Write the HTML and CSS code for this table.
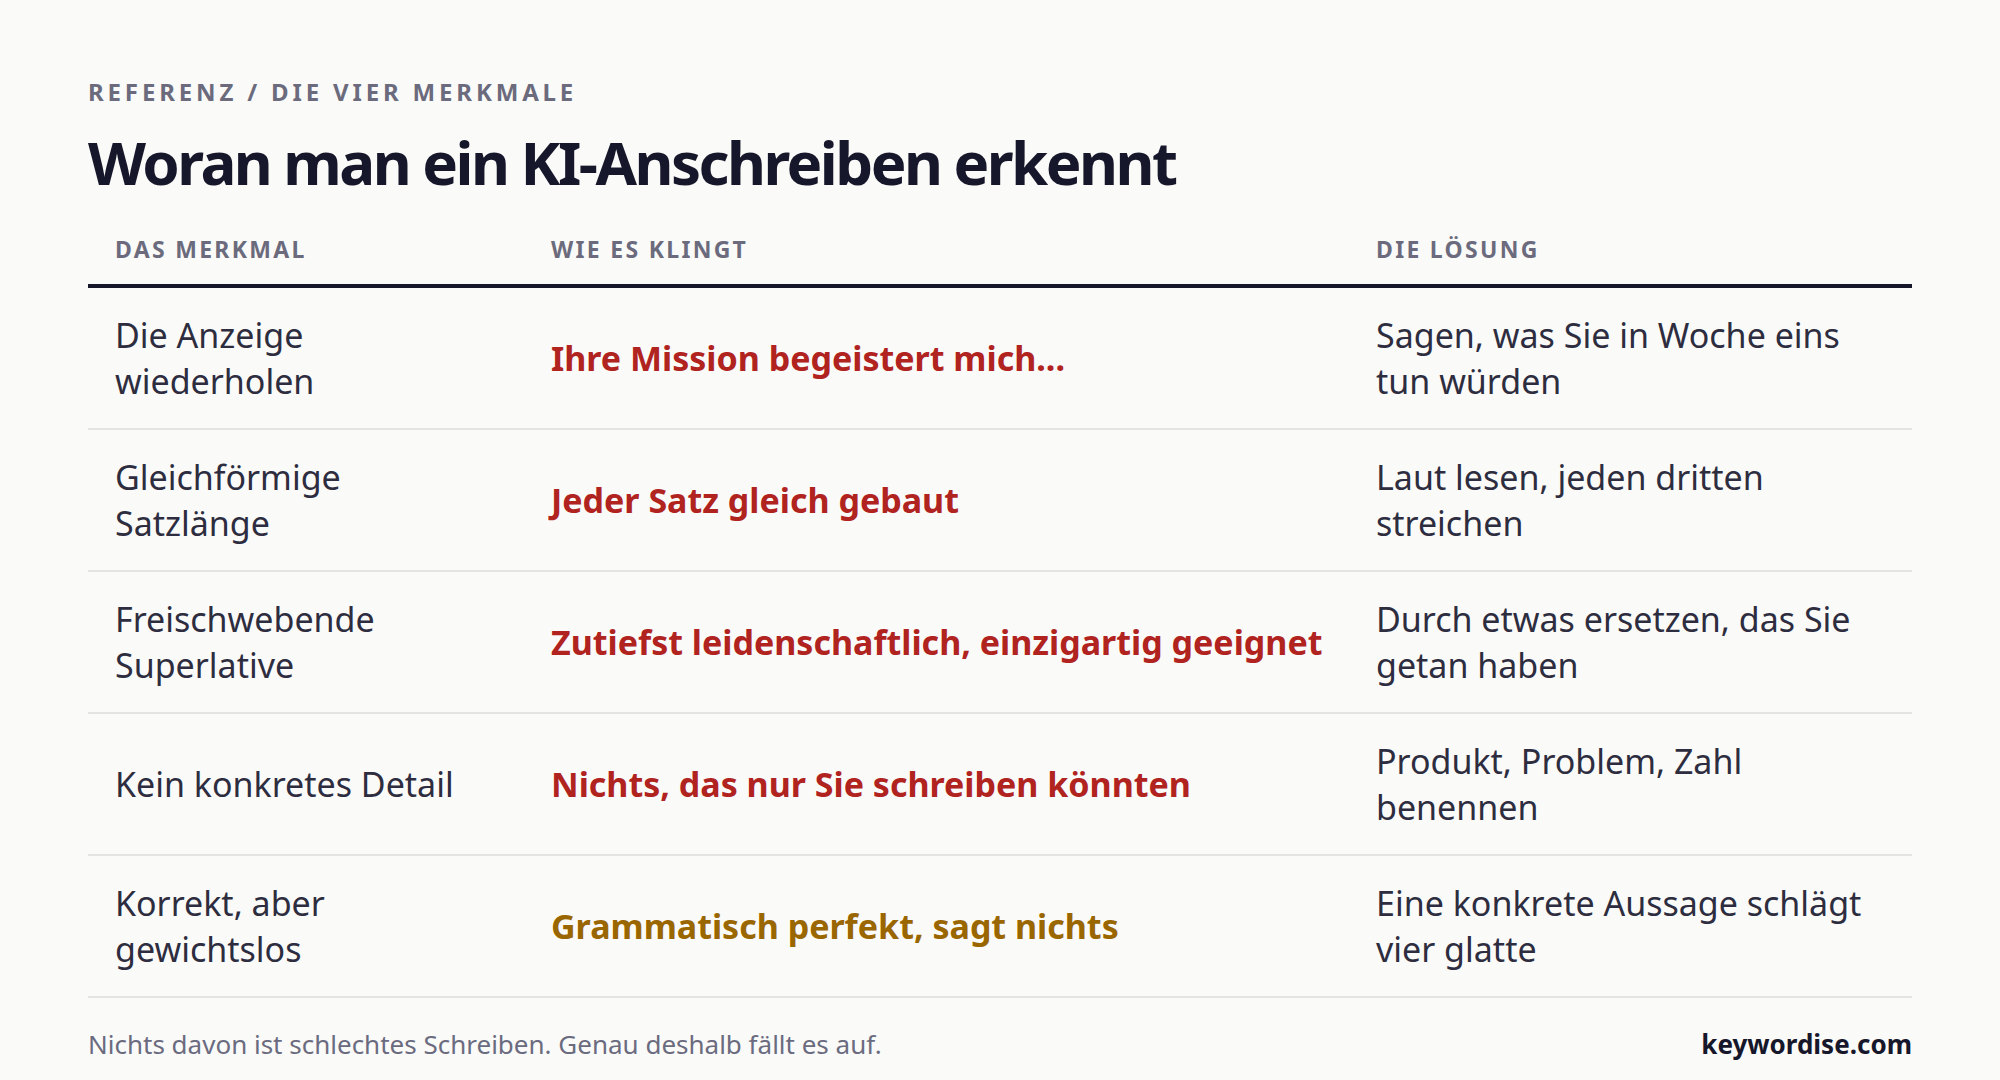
FILE: index.html
```html
<!DOCTYPE html>
<html lang="de">
<head>
<meta charset="utf-8">
<title>Woran man ein KI-Anschreiben erkennt</title>
<link rel="stylesheet" href="styles.css">
</head>
<body>
<main class="page">
  <div class="eyebrow">Referenz / Die vier Merkmale</div>
  <h1 class="title">Woran man ein KI-Anschreiben erkennt</h1>
  <div class="table">
    <div class="row head">
      <div class="cell">Das Merkmal</div>
      <div class="cell">Wie es klingt</div>
      <div class="cell">Die Lösung</div>
    </div>
    <div class="row">
      <div class="cell">Die Anzeige wiederholen</div>
      <div class="cell quote red">Ihre Mission begeistert mich...</div>
      <div class="cell">Sagen, was Sie in Woche eins tun würden</div>
    </div>
    <div class="row">
      <div class="cell">Gleichförmige Satzlänge</div>
      <div class="cell quote red">Jeder Satz gleich gebaut</div>
      <div class="cell">Laut lesen, jeden dritten streichen</div>
    </div>
    <div class="row">
      <div class="cell">Freischwebende Superlative</div>
      <div class="cell quote red">Zutiefst leidenschaftlich, einzigartig geeignet</div>
      <div class="cell">Durch etwas ersetzen, das Sie getan haben</div>
    </div>
    <div class="row">
      <div class="cell">Kein konkretes Detail</div>
      <div class="cell quote red">Nichts, das nur Sie schreiben könnten</div>
      <div class="cell">Produkt, Problem, Zahl benennen</div>
    </div>
    <div class="row">
      <div class="cell">Korrekt, aber gewichtslos</div>
      <div class="cell quote gold">Grammatisch perfekt, sagt nichts</div>
      <div class="cell">Eine konkrete Aussage schlägt vier glatte</div>
    </div>
  </div>
  <footer class="foot">
    <span class="note">Nichts davon ist schlechtes Schreiben. Genau deshalb fällt es auf.</span>
    <span class="brand">keywordise.com</span>
  </footer>
</main>
</body>
</html>
```

FILE: styles.css
```css
html, body {
  margin: 0;
  padding: 0;
  background: #fafaf8;
}
body {
  font-family: "Noto Sans", "Open Sans", sans-serif;
  color: #2d2d3f;
}
.page {
  width: 1824px;
  padding: 77px 88px 0 88px;
  box-sizing: content-box;
}
.eyebrow {
  font-size: 24px;
  font-weight: 700;
  letter-spacing: 0.16em;
  text-transform: uppercase;
  color: #6b6b7d;
  line-height: 30px;
}
.title {
  margin: 17px 0 0 0;
  font-size: 60px;
  font-weight: 700;
  letter-spacing: -0.042em;
  line-height: 76px;
  color: #17172b;
}
.table {
  margin-top: 23px;
  display: flex;
  flex-direction: column;
}
.row {
  display: grid;
  grid-template-columns: 436px 825px 1fr;
  align-items: center;
  border-bottom: 2px solid #e4e4e2;
}
.row .cell {
  padding: 24px 27px;
  font-size: 34px;
  line-height: 46px;
}
.row .cell:first-child {
  padding-right: 44px;
}
.row.head {
  border-bottom: 4px solid #16162a;
}
.row.head .cell {
  padding: 11px 27px 20px 27px;
  font-size: 23px;
  line-height: 30px;
  font-weight: 700;
  letter-spacing: 0.1em;
  text-transform: uppercase;
  color: #6b6b7d;
}
.quote {
  font-weight: 700;
  white-space: nowrap;
}
.red { color: #b0231f; }
.gold { color: #9a6600; }
.foot {
  display: flex;
  justify-content: space-between;
  align-items: baseline;
  padding-top: 28px;
}
.note {
  font-size: 26px;
  color: #6b6b80;
}
.brand {
  font-size: 26px;
  font-weight: 700;
  color: #17172b;
}
```
